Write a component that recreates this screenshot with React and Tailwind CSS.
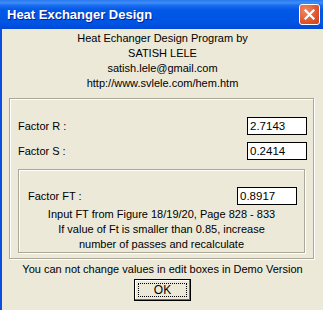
import React from 'react';

const font = { fontFamily: '"Liberation Sans", Arial, sans-serif' };

function GroupBox({ className = '', children }) {
  // etched frame: grey line with a white line inside/outside
  return (
    <div
      className={`border border-[#aca899] shadow-[inset_1px_1px_0_#fff,1px_1px_0_#fff] ${className}`}
    >
      {children}
    </div>
  );
}

function EditBox({ value }) {
  return (
    <div className="w-[60px] h-[18px] border border-black bg-white pl-[2px] text-[11.5px] leading-[16px] text-black">
      {value}
    </div>
  );
}

export default function App() {
  return (
    <div className="w-[323px] h-[310px] flex flex-col overflow-hidden bg-[#ece9d8]" style={font}>
      {/* Title bar */}
      <div className="h-[29px] shrink-0 flex items-center justify-between pl-[7px] pr-[3px] bg-[linear-gradient(to_bottom,#2a78f0_0%,#3d8ff6_10%,#1c6cef_18%,#0058e6_35%,#0054e3_80%,#0049d6_100%)]">
        <span className="text-white font-bold text-[13px] [text-shadow:1px_1px_0_#0a1e8c]">
          Heat Exchanger Design
        </span>
        <button className="w-[21px] h-[21px] rounded-[3px] border border-white bg-[radial-gradient(circle_at_30%_30%,#f08a64,#e0542c_60%,#c8401c)] flex items-center justify-center">
          <svg width="11" height="11" viewBox="0 0 11 11">
            <path d="M1.5 1.5 L9.5 9.5 M9.5 1.5 L1.5 9.5" stroke="#fff" strokeWidth="2.2" strokeLinecap="square" />
          </svg>
        </button>
      </div>

      {/* Body */}
      <div className="flex-1 flex flex-col items-center border-l-2 border-[#0a4fe0] text-black text-[11px]">
        <div className="pt-[2px] text-center leading-[15px]">
          <div>Heat Echanger Design Program by</div>
          <div>SATISH LELE</div>
          <div>satish.lele@gmail.com</div>
          <div>http://www.svlele.com/hem.htm</div>
        </div>

        <GroupBox className="self-start ml-[7px] mt-[7px] w-[305px] pt-[18px] pb-[5px] pl-[8px] pr-[6px]">
          <div className="flex items-center justify-between">
            <span>Factor R :</span>
            <EditBox value="2.7143" />
          </div>
          <div className="flex items-center justify-between mt-[7px]">
            <span>Factor S :</span>
            <EditBox value="0.2414" />
          </div>

          <GroupBox className="mt-[9px] w-[287px] pt-[17px] pl-[9px] pr-[7px]">
            <div className="flex items-center justify-between">
              <span>Factor FT :</span>
              <EditBox value="0.8917" />
            </div>
            <div className="mt-[2px] pr-[2px] text-center leading-[15px]">
              <div>Input FT from Figure 18/19/20, Page 828 - 833</div>
              <div>If value of Ft is smaller than 0.85, increase</div>
              <div>number of passes and recalculate</div>
            </div>
          </GroupBox>
        </GroupBox>

        <div className="mt-[3px] leading-[15px]">You can not change values in edit boxes in Demo Version</div>

        <button className="mt-[2px] w-[57px] h-[22px] border border-black bg-[#ece9d8] shadow-[inset_-1px_-1px_0_#716f64,inset_1px_1px_0_#fff] p-[3px]">
          <span className="flex w-full h-full items-center justify-center border border-dotted border-black text-[12px]">
            OK
          </span>
        </button>
      </div>
    </div>
  );
}
